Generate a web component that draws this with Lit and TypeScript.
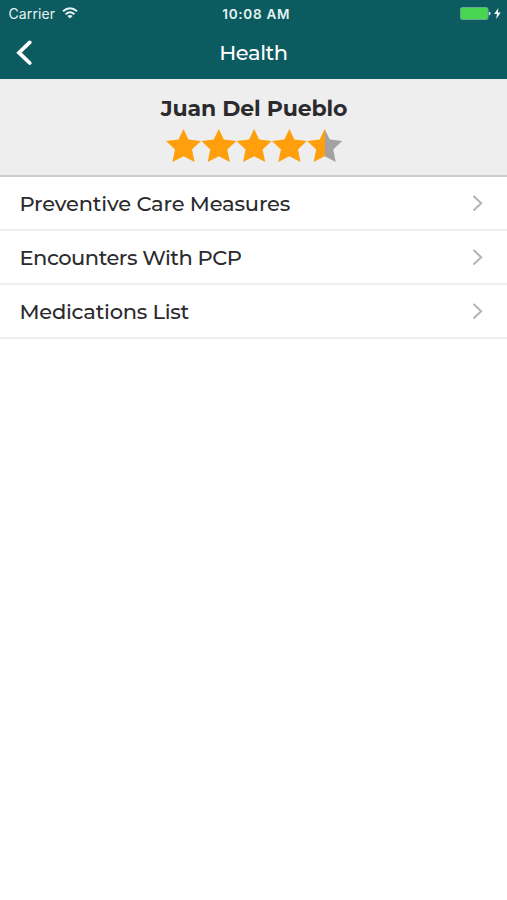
import { LitElement, html, css, svg } from "lit";
import { customElement } from "lit/decorators.js";

const STAR = "M17.5 0 L22.5 10.6 L35 12.1 L26 20.6 L28.6 33 L17.5 27.2 L6.4 33 L9 20.6 L0 12.1 L12.5 10.6 Z";
const ITEMS = [
  { text: "Preventive Care Measures", tracking: -0.17 },
  { text: "Encounters With PCP", tracking: -0.48 },
  { text: "Medications List", tracking: -0.25 },
];

@customElement("app-root")
export class AppRoot extends LitElement {
  static styles = css`
    :host { display: block; height: 900px; background: #fff; color: #2b2b2d; font-family: Montserrat, Inter, "Liberation Sans", sans-serif; overflow: hidden; }
    svg { display: block; }
    .header { background: #0c5b60; color: #fff; height: 79px; }
    .status { display: grid; grid-template-columns: 1fr auto 1fr; align-items: center; height: 27px; padding: 0 6px 0 8.5px; box-sizing: border-box; font-family: Inter, "Liberation Sans", sans-serif; font-size: 14px; color: #e6f3f3; }
    .left { display: flex; align-items: center; gap: 7px; letter-spacing: 0.1px; }
    .left svg { margin-top: -2px; }
    .time { font-weight: 600; font-size: 13.5px; letter-spacing: 0.75px; margin-left: 3px; }
    .right { display: flex; justify-content: flex-end; align-items: center; gap: 3px; }
    .nav { display: grid; grid-template-columns: 48px 1fr 48px; align-items: center; height: 52px; }
    .back { padding-left: 15px; }
    .title { justify-self: center; font-size: 21px; line-height: 30px; font-weight: 500; letter-spacing: -0.4px; }
    .profile { background: #eee; height: 98px; box-sizing: border-box; border-bottom: 2px solid #ccc; display: flex; flex-direction: column; align-items: center; padding-top: 15px; gap: 5px; }
    .profile svg { margin-left: 1px; }
    .name { font-size: 22px; line-height: 30px; font-weight: 700; white-space: nowrap; letter-spacing: -0.12px; margin-left: 1px; }
    .row { height: 54px; box-sizing: border-box; border-bottom: 2px solid #eee; display: flex; align-items: center; justify-content: space-between; padding: 2px 23px 0 19.5px; font-size: 21px; line-height: 30px; font-weight: 500; white-space: nowrap; }
  `;

  render() {
    return html`
      <div class="header">
        <div class="status">
          <div class="left">
            <span>Carrier</span>
            <svg width="16" height="12" viewBox="0 0 16 12" fill="none" stroke="currentColor" stroke-width="1.9">
              <path d="M1 4.3 Q8 -2 15 4.3" /><path d="M3.6 7.2 Q8 3.2 12.4 7.2" />
              <path d="M8 11.4 L5.4 8.9 Q8 7 10.6 8.9 Z" fill="currentColor" stroke="none" />
            </svg>
          </div>
          <div class="time">10:08 AM</div>
          <div class="right">
            <svg width="31" height="13" viewBox="0 0 31 13">
              <rect x="0.5" y="0.5" width="27.5" height="12" rx="1.8" fill="#48d651" stroke="#68a890" />
              <path d="M28.8 4.5 Q30.6 5 30.6 6.5 Q30.6 8 28.8 8.5 Z" fill="#d8eeea" />
            </svg>
            <svg width="7" height="11" viewBox="0 0 7 11"><path d="M4.4 0 L0.2 6 L3 6 L2.2 11 L6.7 4.6 L3.8 4.6 Z" fill="#fff" /></svg>
          </div>
        </div>
        <div class="nav">
          <div class="back">
            <svg width="18" height="26" viewBox="0 0 18 26" fill="none" stroke="#fff" stroke-width="3.8" stroke-linecap="round"><path d="M14.7 2.4 L4 12.7 L14.7 23" /></svg>
          </div>
          <div class="title">Health</div>
        </div>
      </div>
      <div class="profile">
        <div class="name">Juan Del Pueblo</div>
        <svg width="177" height="33" viewBox="0 0 177 33">
          <defs><linearGradient id="half"><stop offset="50%" stop-color="#ff9f0c" /><stop offset="50%" stop-color="#a2a2a2" /></linearGradient></defs>
          ${[0, 1, 2, 3, 4].map((i) => svg`<path transform="translate(${i * 35.3} 0)" d=${STAR} fill=${i === 4 ? "url(#half)" : "#ff9f0c"} />`)}
        </svg>
      </div>
      ${ITEMS.map((item) => html`
        <div class="row">
          <span style="letter-spacing: ${item.tracking}px">${item.text}</span>
          <svg width="12" height="18" viewBox="0 0 12 18" fill="none" stroke="#b4b4b4" stroke-width="2"><path d="M1.5 1 L9.2 8.2 L1.5 15.5" /></svg>
        </div>`)}
    `;
  }
}
